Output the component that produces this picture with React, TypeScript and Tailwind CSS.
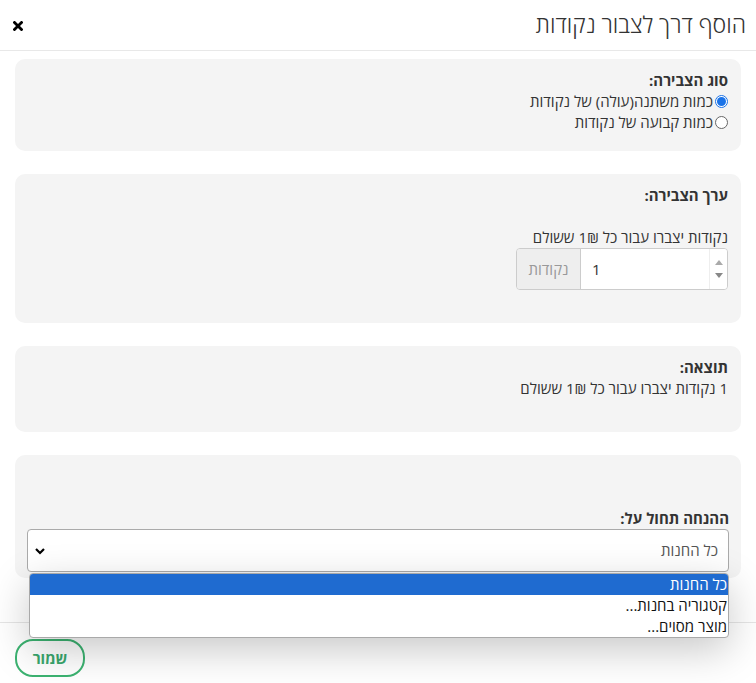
import React from "react";

export default function App() {
  return (
    <div
      dir="rtl"
      className="relative w-[756px] h-[683px] overflow-hidden bg-white text-[#333] text-[15px] leading-[21px]"
      style={{ fontFamily: '"Open Sans", "Noto Sans", Arial, sans-serif' }}
    >
      {/* header */}
      <div className="h-[51px] border-b border-[#e8e8e8] flex items-center justify-between pr-[10px] pl-[13px]">
        <h1 className="text-[23px] font-light text-[#333] leading-none pb-[2px]">הוסף דרך לצבור נקודות</h1>
        <svg width="10" height="10" viewBox="0 0 10 10" className="mt-[1px]">
          <path d="M1.5 1.5 L8.5 8.5 M8.5 1.5 L1.5 8.5" stroke="#000" strokeWidth="2.8" strokeLinecap="square" />
        </svg>
      </div>

      {/* body */}
      <div className="px-[15px] pt-[8px] flex flex-col gap-[23px]">
        <div className="bg-[#f4f4f4] rounded-[10px] h-[92px] pr-[13px] pt-[11px]">
          <div className="font-bold">סוג הצבירה:</div>
          <label className="flex items-center gap-[2px]">
            <span className="w-[13px] h-[13px] rounded-full border border-[#1a73e8] flex items-center justify-center bg-white">
              <span className="w-[9px] h-[9px] rounded-full bg-[#1a73e8]" />
            </span>
            <span>כמות משתנה(עולה) של נקודות</span>
          </label>
          <label className="flex items-center gap-[2px]">
            <span className="w-[13px] h-[13px] rounded-full border border-[#666] bg-white" />
            <span>כמות קבועה של נקודות</span>
          </label>
        </div>

        <div className="bg-[#f4f4f4] rounded-[10px] h-[149px] pr-[13px] pt-[11px]">
          <div className="font-bold">ערך הצבירה:</div>
          <div className="mt-[21px]">נקודות יצברו עבור כל 1₪ ששולם</div>
          <div dir="ltr" className="w-[212px] h-[42px] flex border border-[#ccc] rounded-[4px] overflow-hidden">
            <div className="w-[64px] bg-[#eee] border-r border-[#ccc] flex items-center justify-center text-[#999]">נקודות</div>
            <div className="flex-1 bg-white flex items-center pl-[11px]">1</div>
            <div className="w-[18px] bg-white flex flex-col items-center justify-center gap-[8px] border-l border-[#eee]">
              <svg width="8" height="5" viewBox="0 0 8 5"><path d="M0 5 L4 0 L8 5 Z" fill="#aaa" /></svg>
              <svg width="8" height="5" viewBox="0 0 8 5"><path d="M0 0 L4 5 L8 0 Z" fill="#888" /></svg>
            </div>
          </div>
        </div>

        <div className="bg-[#f4f4f4] rounded-[10px] h-[86px] pr-[13px] pt-[11px]">
          <div className="font-bold">תוצאה:</div>
          <div>1 נקודות יצברו עבור כל 1₪ ששולם</div>
        </div>

        <div className="bg-[#f4f4f4] rounded-[10px] h-[123px] px-[12px] pt-[53px]">
          <div className="font-bold">ההנחה תחול על:</div>
          <div className="h-[43px] bg-white border border-[#aaa] rounded-[4px] flex items-center justify-between pr-[10px] pl-[6px] text-[#555]">
            <span>כל החנות</span>
            <svg width="12" height="10" viewBox="0 0 12 10"><path d="M2 3 L6 7 L10 3" stroke="#000" strokeWidth="2.2" fill="none" /></svg>
          </div>
        </div>
      </div>

      {/* footer */}
      <div className="absolute left-0 right-0 top-[622px] border-t border-[#e6e6e6] h-[61px] flex items-start justify-end pl-[15px] pt-[16px]">
        <button className="w-[70px] h-[38px] rounded-[18px] border-2 border-[#3cb371] text-[#3aa76d] font-bold text-[15px] bg-white">שמור</button>
      </div>

      {/* dropdown */}
      <div className="absolute left-[29px] top-[573px] w-[700px] bg-white border border-[#a9a9a9] rounded-[4px] shadow-[0_12px_40px_rgba(0,0,0,0.22)] overflow-hidden text-[15px] text-[#111] leading-[21px]">
        <div className="h-[21px] bg-[#1f6bd0] text-white pr-[1px]">כל החנות</div>
        <div className="h-[21px] pr-[1px]">קטגוריה בחנות...</div>
        <div className="h-[21px] pr-[1px]">מוצר מסוים...</div>
      </div>
    </div>
  );
}
